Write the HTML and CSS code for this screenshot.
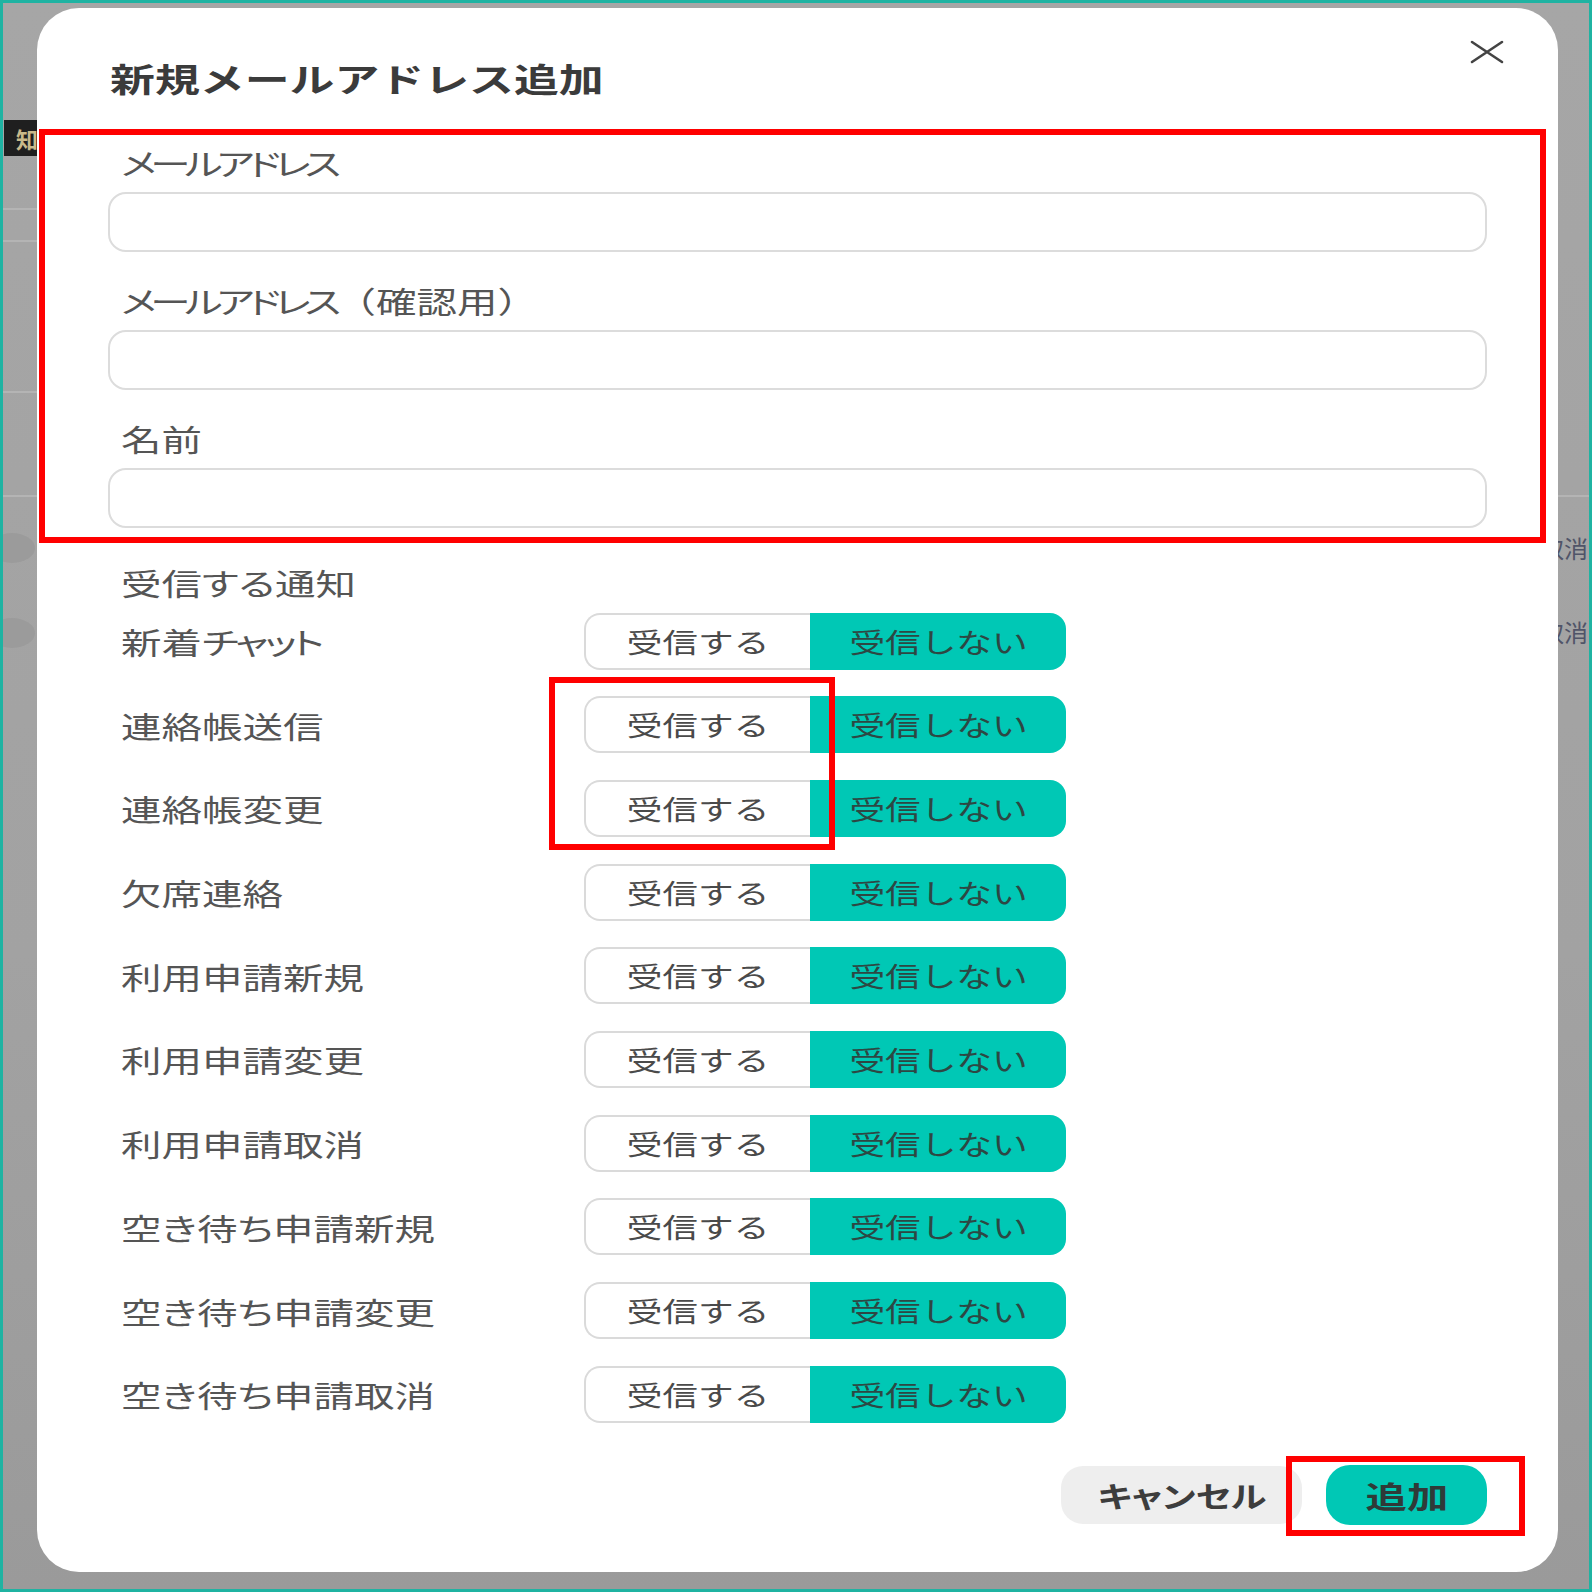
FILE: index.html
```html
<!DOCTYPE html>
<html lang="ja">
<head>
<meta charset="utf-8">
<title>新規メールアドレス追加</title>
<link rel="stylesheet" href="styles.css">
</head>
<body>
<div class="screen">
  <div class="under">
    <div class="under-tag">知</div>
    <div class="under-line l1"></div>
    <div class="under-line l2"></div>
    <div class="under-line l3"></div>
    <div class="under-line l4"></div>
    <div class="under-dot d1"></div>
    <div class="under-dot d2"></div>
    <div class="under-text t1">取消</div>
    <div class="under-text t2">取消</div>
  </div>

  <div class="modal">
    <div class="modal-head">
      <h1 class="title"><span class="sx">新規メールアドレス追加</span></h1>
      <button class="close" type="button" aria-label="閉じる">
        <svg width="34" height="24" viewBox="0 0 34 24"><path d="M2 2 L32 22 M32 2 L2 22" stroke="#444" stroke-width="2.6" stroke-linecap="round" fill="none"/></svg>
      </button>
    </div>

    <div class="fields">
      <div class="field">
        <label class="label"><span class="sx"><span class="kana">メールアドレス</span></span></label>
        <input class="input" type="text">
      </div>
      <div class="field">
        <label class="label"><span class="sx"><span class="kana">メールアドレス</span><span class="np">（確認用）</span></span></label>
        <input class="input" type="text">
      </div>
      <div class="field">
        <label class="label"><span class="sx">名前</span></label>
        <input class="input" type="text">
      </div>
    </div>

    <div class="section-title"><span class="sx">受信する通知</span></div>

    <div class="rows">
      <div class="row"><div class="row-label"><span class="sx">新着<span class="kana-s">チャット</span></span></div><div class="toggle"><span class="seg seg-on"><span class="sxc">受信する</span></span><span class="seg seg-off"><span class="sxc">受信しない</span></span></div></div>
      <div class="row"><div class="row-label"><span class="sx">連絡帳送信</span></div><div class="toggle"><span class="seg seg-on"><span class="sxc">受信する</span></span><span class="seg seg-off"><span class="sxc">受信しない</span></span></div></div>
      <div class="row"><div class="row-label"><span class="sx">連絡帳変更</span></div><div class="toggle"><span class="seg seg-on"><span class="sxc">受信する</span></span><span class="seg seg-off"><span class="sxc">受信しない</span></span></div></div>
      <div class="row"><div class="row-label"><span class="sx">欠席連絡</span></div><div class="toggle"><span class="seg seg-on"><span class="sxc">受信する</span></span><span class="seg seg-off"><span class="sxc">受信しない</span></span></div></div>
      <div class="row"><div class="row-label"><span class="sx">利用申請新規</span></div><div class="toggle"><span class="seg seg-on"><span class="sxc">受信する</span></span><span class="seg seg-off"><span class="sxc">受信しない</span></span></div></div>
      <div class="row"><div class="row-label"><span class="sx">利用申請変更</span></div><div class="toggle"><span class="seg seg-on"><span class="sxc">受信する</span></span><span class="seg seg-off"><span class="sxc">受信しない</span></span></div></div>
      <div class="row"><div class="row-label"><span class="sx">利用申請取消</span></div><div class="toggle"><span class="seg seg-on"><span class="sxc">受信する</span></span><span class="seg seg-off"><span class="sxc">受信しない</span></span></div></div>
      <div class="row"><div class="row-label"><span class="sx">空き待ち申請新規</span></div><div class="toggle"><span class="seg seg-on"><span class="sxc">受信する</span></span><span class="seg seg-off"><span class="sxc">受信しない</span></span></div></div>
      <div class="row"><div class="row-label"><span class="sx">空き待ち申請変更</span></div><div class="toggle"><span class="seg seg-on"><span class="sxc">受信する</span></span><span class="seg seg-off"><span class="sxc">受信しない</span></span></div></div>
      <div class="row"><div class="row-label"><span class="sx">空き待ち申請取消</span></div><div class="toggle"><span class="seg seg-on"><span class="sxc">受信する</span></span><span class="seg seg-off"><span class="sxc">受信しない</span></span></div></div>
    </div>

    <div class="footer">
      <button class="btn btn-cancel" type="button"><span class="sxc">キャンセル</span></button>
      <button class="btn btn-add" type="button"><span class="sxc">追加</span></button>
    </div>
  </div>

  <div class="annot annot-fields"></div>
  <div class="annot annot-toggle"></div>
  <div class="annot annot-add"></div>
</div>
</body>
</html>
```

FILE: styles.css
```css
* { box-sizing: border-box; }
html, body { margin: 0; padding: 0; }
body {
  font-family: "Noto Sans CJK JP", "Noto Sans", sans-serif;
  background: #a3a3a3;
}
.screen {
  position: relative;
  width: 1592px;
  height: 1592px;
  border: 3px solid #1fb3a2;
  background: linear-gradient(180deg, #a6a6a6 0%, #a2a2a2 60%, #9a9a9a 100%);
  overflow: hidden;
  padding: 5px 0 0 34px;
}

/* faint page below the overlay */
.under { position: absolute; inset: 0; }
.under-tag {
  position: absolute; left: 1px; top: 117px; width: 34px; height: 36px;
  background: #1f1f1f; color: #c9b98a; font-size: 22px; line-height: 36px;
  text-align: right; overflow: hidden; font-weight: 700;
}
.under-line { position: absolute; height: 2px; background: #b4b4b4; }
.under-line.l1 { left: 0; top: 205px; width: 40px; }
.under-line.l2 { left: 0; top: 237px; width: 40px; }
.under-line.l3 { left: 0; top: 388px; width: 40px; }
.under-line.l4 { left: 0; top: 492px; width: 1600px; }
.under-dot {
  position: absolute; left: -14px; width: 46px; height: 30px;
  border-radius: 50%; background: #9b9b9b;
}
.under-dot.d1 { top: 530px; }
.under-dot.d2 { top: 615px; }
.under-text {
  position: absolute; left: 1537px; font-size: 24px; color: #505468;
  line-height: 30px; white-space: nowrap;
}
.under-text.t1 { top: 530px; }
.under-text.t2 { top: 614px; }

.modal {
  position: relative;
  width: 1521px;
  height: 1564px;
  background: #ffffff;
  border-radius: 42px;
  padding: 50px 71px 0 71px;
}

.sx {
  display: inline-block;
  white-space: nowrap;
  transform: scaleX(1.35);
  transform-origin: left center;
}
.sxc {
  display: inline-block;
  white-space: nowrap;
  transform: scaleX(1.32);
  transform-origin: center center;
}
.kana { letter-spacing: -4.3px; }
.kana-s { letter-spacing: -2.6px; }
.np { font-feature-settings: normal; }

.modal-head {
  display: flex;
  justify-content: space-between;
  align-items: flex-start;
  height: 40px;
}
.title {
  margin: 0 0 0 2px;
  font-size: 33px;
  font-weight: 700;
  line-height: 40px;
  color: #3b3b3b;
}
.title .sx { transform: scaleX(1.36); }
.close {
  width: 34px; height: 24px;
  margin: -18px -17px 0 0;
  padding: 0;
  border: 0;
  background: transparent;
  display: flex;
}

.fields {
  margin-top: 43.5px;
  display: flex;
  flex-direction: column;
  gap: 28px;
}
.field { display: flex; flex-direction: column; gap: 10px; }
.label, .section-title, .row-label {
  display: block;
  padding-left: 12.5px;
  font-size: 30px;
  line-height: 40px;
  height: 40px;
  color: #555555;
  font-feature-settings: "palt";
}
.input {
  width: 100%;
  height: 60px;
  border: 2px solid #dcdcdc;
  border-radius: 18px;
  background: #fff;
  outline: none;
}

.section-title { margin-top: 34px; }

.rows {
  margin-top: 11px;
  display: flex;
  flex-direction: column;
  gap: 26.7px;
}
.row {
  display: grid;
  grid-template-columns: 476.4px 482px;
  align-items: center;
  height: 57px;
}
.toggle { display: flex; height: 57px; }
.seg {
  display: flex;
  align-items: center;
  justify-content: center;
  font-size: 27px;
  line-height: 1;
}
.seg-on {
  width: 226px;
  background: #fff;
  border: 2px solid #dadada;
  border-right: 0;
  border-radius: 16px 0 0 16px;
  color: #4a4a4a;
}
.seg-off {
  width: 256px;
  background: #00c8b5;
  border-radius: 0 16px 16px 0;
  color: #2d4743;
}

.footer {
  margin-top: 42.4px;
  display: flex;
  justify-content: flex-end;
  align-items: center;
  gap: 24px;
}
.btn {
  border: 0;
  font-family: inherit;
  font-weight: 700;
  display: flex;
  align-items: center;
  justify-content: center;
  padding: 0;
}
.btn-cancel {
  width: 241px; height: 58px;
  background: #eeeeee;
  border-radius: 22px;
  color: #3d3d3d;
  font-size: 29px;
  font-feature-settings: "palt";
}
.btn-cancel .sxc { transform: scaleX(1.26); }
.btn-add {
  width: 161px; height: 60px;
  background: #00c8b5;
  border-radius: 24px;
  color: #2f3a38;
  font-size: 30px;
}
.btn-add .sxc { transform: scaleX(1.38); }

.annot {
  position: absolute;
  border: 6px solid #ff0000;
  pointer-events: none;
}
.annot-fields { left: 35.5px; top: 126px; width: 1507px; height: 414px; }
.annot-toggle { left: 546px; top: 674px; width: 286px; height: 173px; }
.annot-add { left: 1283px; top: 1453px; width: 239px; height: 80px; }
```
